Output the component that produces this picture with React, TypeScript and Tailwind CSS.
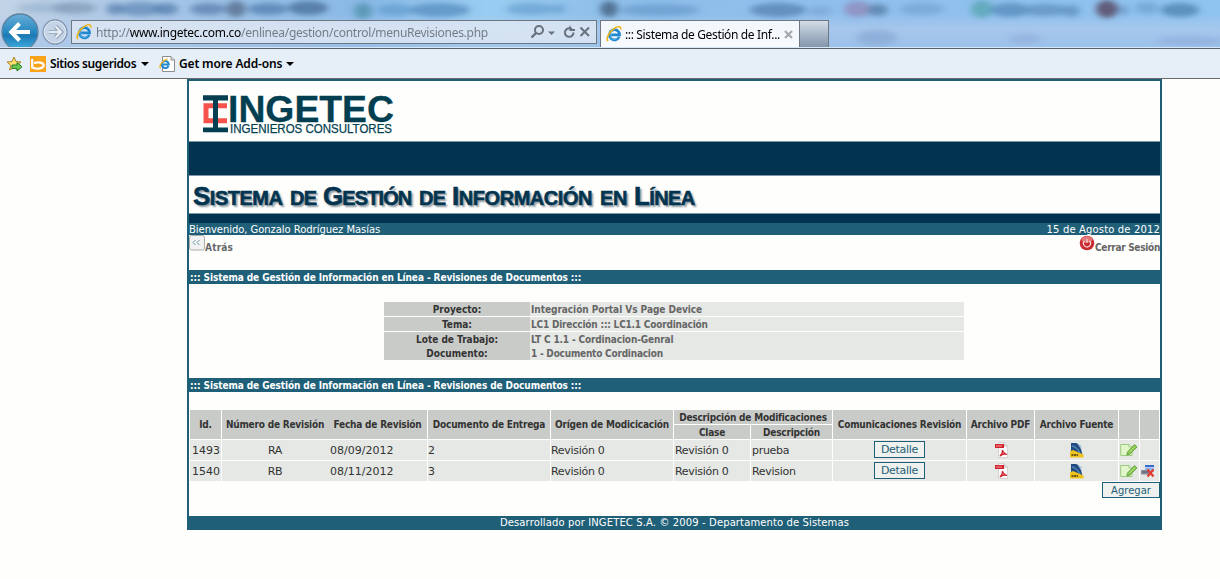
import type { ReactNode } from "react";

const sans = "font-['DejaVu_Sans',sans-serif]";
const cond = "font-['DejaVu_Sans_Condensed','DejaVu_Sans',sans-serif] [font-stretch:condensed] font-bold";

function IeLogo({ size = 16 }: { size?: number }) {
  return (
    <svg width={size} height={size} viewBox="0 0 16 16" fill="none" className="shrink-0">
      <path d="M13.2 10.8A5.1 5.1 0 1 1 13.6 8.9H5.2" stroke="#2188cf" strokeWidth="2.7" />
      <path d="M12.3 10.8A4.5 4.5 0 0 1 4 10.5" stroke="#64bdec" strokeWidth="0.9" />
      <path d="M2.2 15C-.9 13.6 3 5.700 8.600 2.300C12 .2 15.300 0 14.800 3.700" stroke="#efb51c" strokeWidth="1.6" />
    </svg>
  );
}

function Glass() {
  const blobs: [number, number, number, number, string, number][] = [
    [45, 8, 28, 5, "#8ba8c6", 0.5],
    [75, 8, 22, 6, "#7f97b4", 0.7],
    [115, 9, 9, 6, "#5e82b0", 0.75],
    [140, 9, 22, 7, "#5c86b5", 0.7],
    [166, 9, 12, 6, "#4f79aa", 0.7],
    [208, 9, 18, 6, "#5c7fae", 0.75],
    [236, 9, 10, 8, "#5c7393", 0.85],
    [268, 9, 20, 6, "#527eae", 0.75],
    [308, 8, 20, 7, "#4b7198", 0.8],
    [363, 11, 9, 8, "#4d8fa8", 0.75],
    [395, 10, 18, 6, "#5a96c8", 0.6],
    [440, 10, 30, 7, "#5a91c2", 0.8],
    [530, 9, 24, 6, "#6ba1d2", 0.75],
    [558, 9, 8, 5, "#6ba1d2", 0.7],
    [609, 9, 9, 8, "#4c6b8c", 0.9],
    [660, 10, 40, 6, "#6b9cce", 0.75],
    [778, 10, 28, 7, "#5885b5", 0.8],
    [820, 11, 12, 5, "#7aa7d4", 0.7],
    [858, 9, 14, 8, "#9085b5", 0.7],
    [878, 10, 10, 6, "#567fa8", 0.8],
    [922, 9, 22, 6, "#78a6d5", 0.8],
    [982, 9, 11, 9, "#5fa9b8", 0.9],
    [1010, 10, 20, 7, "#5d90c0", 0.85],
    [1045, 10, 24, 6, "#6595c2", 0.85],
    [1071, 11, 9, 6, "#6595c2", 0.85],
    [1107, 9, 11, 9, "#5f5673", 0.95],
    [1123, 10, 6, 5, "#6f9cc8", 0.8],
    [1147, 8, 12, 6, "#76a7d4", 0.85],
    [1180, 10, 19, 7, "#5588b5", 0.85],
    [877, 38, 20, 8, "#88a8d4", 0.7],
    [1025, 39, 16, 5, "#91aedb", 0.7],
    [1190, 41, 34, 5, "#92aedb", 0.7],
  ];
  return (
    <svg width="1220" height="48" className="absolute inset-0">
      <defs>
        <linearGradient id="sky" x1="0" x2="1" y1="0" y2="0">
          <stop offset="0" stopColor="#c2d3e6" />
          <stop offset=".1" stopColor="#adc9e6" />
          <stop offset=".2" stopColor="#97bfe6" />
          <stop offset=".3" stopColor="#88b9e7" />
          <stop offset=".4" stopColor="#9acdf1" />
          <stop offset=".5" stopColor="#8dbee9" />
          <stop offset=".7" stopColor="#90bfed" />
          <stop offset="1" stopColor="#8fc3f0" />
        </linearGradient>
        <linearGradient id="haze" x1="0" x2="0" y1="0" y2="1">
          <stop offset=".3" stopColor="#b3caeb" stopOpacity="0" />
          <stop offset=".6" stopColor="#b3caeb" stopOpacity=".65" />
          <stop offset="1" stopColor="#a3c3e9" stopOpacity=".6" />
        </linearGradient>
        <filter id="soft" filterUnits="userSpaceOnUse" x="0" y="-20" width="1220" height="90" colorInterpolationFilters="sRGB">
          <feGaussianBlur stdDeviation="3.5 2.5" />
        </filter>
      </defs>
      <rect width="1220" height="48" fill="url(#sky)" />
      <rect width="1220" height="48" fill="url(#haze)" />
      <g filter="url(#soft)">
        {blobs.map(([x, y, rx, ry, c, o]) => (
          <ellipse key={x} cx={x} cy={y} rx={rx} ry={ry} fill={c} opacity={o} />
        ))}
      </g>
      <rect y="47" width="1220" height="1" fill="#d6e8f8" />
    </svg>
  );
}

function NavButtons() {
  return (
    <svg width="71" height="47" className="shrink-0">
      <defs>
        <linearGradient id="back" x1="0" x2="0" y1="0" y2="1">
          <stop offset="0" stopColor="#69aed7" />
          <stop offset=".45" stopColor="#2d8cc4" />
          <stop offset=".6" stopColor="#1c7ab5" />
          <stop offset="1" stopColor="#42b1e2" />
        </linearGradient>
      </defs>
      <circle cx="20" cy="32" r="18" fill="url(#back)" stroke="#60829f" strokeWidth="1.3" />
      <path d="M30 32H12M19.500 23.500L11.300 32L19.500 40.500" stroke="#fff" strokeWidth="4" fill="none" />
      <circle cx="55" cy="32" r="12" fill="#c4d3e6" stroke="#8496af" strokeWidth="1.3" />
      <circle cx="55" cy="32" r="10.800" fill="none" stroke="#dce7f3" />
      <path d="M49 32H60M55.500 26.500L61 32L55.500 37.500" stroke="#8799b1" strokeWidth="4.200" fill="none" />
      <path d="M49 32H60M55.500 26.500L61 32L55.500 37.500" stroke="#e3ebf5" strokeWidth="2.400" fill="none" />
    </svg>
  );
}

function Browser() {
  return (
    <header className="h-[79px] font-['Noto_Sans',sans-serif]">
      <div className="relative h-12 overflow-hidden">
        <Glass />
        <div className="relative flex h-12 items-start">
          <NavButtons />
          <div className="mt-5 flex h-6 w-[526px] items-center border border-[#6d7883] bg-[#e0e9f4]/80 pl-1 text-[12px] text-[#737d87]">
            <IeLogo />
            <span className="ml-[4px] whitespace-nowrap pt-px tracking-[-0.27px]">
              http://<span className="text-black">www.ingetec.com.co</span>/enlinea/gestion/control/menuRevisiones.php
            </span>
            <svg width="66" height="20" className="ml-auto mr-[2px] shrink-0" fill="none" stroke="#67717c" strokeWidth="2">
              <circle cx="11" cy="8" r="4" />
              <path d="M8 11L3.500 15.500" strokeWidth="2.400" />
              <path d="M20 9.500H27L23.500 13Z" fill="#67717c" stroke="none" />
              <path d="M45.500 10.500A4.300 4.300 0 1 1 42.500 6.400" />
              <path d="M41.500 3V9H47V7H44.500Z" fill="#67717c" stroke="none" />
              <path d="M52.500 5.500L61 14M61 5.500L52.500 14" />
            </svg>
          </div>
          <div className="ml-[3px] mt-5 flex h-[27px] w-[200px] items-center border-x border-t border-[#6d7883] bg-gradient-to-b from-[#f2f7fc] to-[#f7faff] pl-[5px] text-[12px] text-black">
            <IeLogo />
            <span className="ml-[3px] w-[155px] whitespace-nowrap pt-px tracking-[-0.36px]">::: Sistema de Gestión de Inf...</span>
            <svg width="9" height="9" className="ml-[4px] shrink-0" stroke="#a5a9ad" strokeWidth="2.200">
              <path d="M1 1L8 8M8 1L1 8" />
            </svg>
          </div>
          <div className="mt-5 h-[27px] w-[29px] border-r border-t border-[#6d7883] bg-gradient-to-b from-[#d4dde7] via-[#aab8c8] to-[#8496ab]" />
        </div>
      </div>
      <div className="flex h-[31px] items-center border-b border-t border-b-[#6b6b6b] border-t-[#56616e] bg-[#e6eef8] pl-[6px] text-[12px] font-semibold text-black">
        <svg width="17" height="16" className="shrink-0">
          <path d="M8 1L10 5.500L15 6L11.300 9.300L12.500 14L8 11.600L3.500 14L4.700 9.300L1 6L6 5.500Z" fill="#fcdc72" stroke="#aa8427" />
          <path d="M6 9H11V6.500L16 10.800L11 15V12.500H6Z" fill="#6bc653" stroke="#278126" />
        </svg>
        <svg width="16" height="16" className="ml-[7px] shrink-0">
          <rect width="16" height="16" fill="#f9a31b" />
          <path d="M2.200 3V11.500Q8 14 12.500 11.500Q15 9.500 12.300 7.200Q9 5.500 4 7" fill="none" stroke="#fff" strokeWidth="2.200" />
        </svg>
        <span className="ml-[4px] w-[87px] whitespace-nowrap tracking-[-0.38px]">Sitios sugeridos</span>
        <svg width="8" height="4" className="ml-[4px]"><path d="M0 0H8L4 4Z" /></svg>
        <svg width="16" height="16" viewBox="0 0 16 16" className="ml-[10px] shrink-0">
          <path d="M3.500 .5H12L15.500 4V15.500H3.500Z" fill="#fff" stroke="#8d8d8d" />
          <path d="M12 .5V4H15.500" fill="#ddd" stroke="#8d8d8d" />
          <path d="M9.500 10A3.500 3.500 0 1 1 9.800 8.500H3" fill="none" stroke="#2188cf" strokeWidth="2" />
          <path d="M1.500 12C-.5 10 4 4 8.500 3.200" fill="none" stroke="#efb51c" strokeWidth="1.300" />
        </svg>
        <span className="ml-[4px] w-[104px] whitespace-nowrap tracking-[-0.15px]">Get more Add-ons</span>
        <svg width="8" height="4" className="ml-[3px]"><path d="M0 0H8L4 4Z" /></svg>
      </div>
    </header>
  );
}

function Logo() {
  return (
    <svg width="220" height="60" fontFamily="Liberation Sans, sans-serif" fill="#033f50">
      <path d="M14.500 22.300H38V27.200H19.500V37.300H38V42.300H14.500Z" fill="#f4524a" />
      <path d="M14 14.300H39V19.500H29V46.500H39V51.200H14V46.500H24V19.500H14Z" />
      <text x="39" y="40.500" fontSize="36" fontWeight="700" stroke="#033f50" strokeWidth=".3" textLength="166" lengthAdjust="spacingAndGlyphs">INGETEC</text>
      <text x="41" y="51.500" fontSize="12.500" stroke="#033f50" strokeWidth=".25" textLength="162" lengthAdjust="spacingAndGlyphs">INGENIEROS CONSULTORES</text>
    </svg>
  );
}

function Title() {
  return (
    <div className="flex h-[37px] items-baseline gap-[7px] pt-[4px] pl-[4px] font-['Liberation_Sans',sans-serif] text-[20px] leading-[33px] font-bold whitespace-nowrap text-[#03344f] [-webkit-text-stroke:0.6px_#03344f] [text-shadow:2px_2px_2px_#8b979f]">
      <span className="w-[90px] tracking-[-0.5px]"><span className="text-[26px]">S</span>ISTEMA</span>
      <span className="w-[26px] tracking-[-0.7px]">DE</span>
      <span className="w-[89px] tracking-[-0.9px]"><span className="text-[26px]">G</span>ESTIÓN</span>
      <span className="w-[26px] tracking-[-0.7px]">DE</span>
      <span className="w-[141px] tracking-[-0.45px]"><span className="text-[26px]">I</span>NFORMACIÓN</span>
      <span className="w-[27px] tracking-[-0.3px]">EN</span>
      <span className="w-[61px] tracking-[-0.6px]"><span className="text-[26px]">L</span>ÍNEA</span>
    </div>
  );
}

function SectionBar() {
  return (
    <div className={`${cond} flex h-[14px] items-center bg-[#1f6078] pl-px text-[10px] tracking-[-0.09px] whitespace-pre text-white`}>
      <span>::: Sistema de Gestión de Información en Línea - Revisiones de Documentos :::</span>
    </div>
  );
}

function PdfIcon() {
  return (
    <svg width="16" height="16">
      <path d="M4.500 .5H10L13.500 4V15.500H4.500Z" fill="#fafafa" stroke="#d4d4d4" />
      <path d="M10 .5V4H13.500" fill="#ddd" stroke="#c4c4c4" />
      <rect x="1" y="2" width="9" height="4" fill="#d3232d" />
      <path d="M2 4H8" stroke="#f0a0a0" />
      <path d="M6 14Q9 11 8.500 8Q9 11 13 12.500Q9 11 6 14Z" fill="none" stroke="#d3232d" strokeWidth="1.300" />
    </svg>
  );
}

function FileIcon() {
  return (
    <svg width="16" height="16">
      <path d="M2 1H7Q11 2 12 7L14 15H2Z" fill="#234a80" />
      <path d="M8 1L12.500 4V8Z" fill="#a8c3df" />
      <path d="M3 4Q8 5 11 11" stroke="#4e83b5" strokeWidth="1.500" fill="none" />
      <path d="M1 9.500L4 8L14.500 12.500V15.500H1Z" fill="#eec31b" />
      <path d="M2.500 13H9" stroke="#705c12" strokeWidth="1.800" strokeDasharray="2 .5" />
    </svg>
  );
}

function EditIcon() {
  return (
    <svg width="18" height="16">
      <path d="M.7 2.500H9L12 5V13.500H.7Z" fill="#e2f6cc" stroke="#9dca7f" />
      <path d="M9 2.500V5H12" fill="#fff" stroke="#9dca7f" />
      <path d="M7.500 10L14.500 2.500L17 5L10 12L6.800 13Z" fill="#80c245" stroke="#6ba344" strokeWidth=".9" />
      <path d="M9 10.500L15 4.500" stroke="#c8eba0" />
    </svg>
  );
}

function DeleteIcon() {
  return (
    <svg width="14" height="14">
      <rect x="4" y="1" width="9" height="7" fill="#b7cdf4" />
      <rect x="4" y="1" width="9" height="2" fill="#3c6bd0" />
      <path d="M4 5H13" stroke="#7199df" />
      <rect x="0" y="6" width="8" height="4.500" rx="1" fill="#858c9b" />
      <path d="M1 8H7" stroke="#555c6d" />
      <path d="M6.500 5.500L12.500 12.500M12.500 5.500L6.500 12.500" stroke="#e03a2e" strokeWidth="2.200" />
    </svg>
  );
}

function Head({ children, className = "" }: { children?: ReactNode; className?: string }) {
  return (
    <div className={`${cond} flex items-center justify-center bg-[#c9cbc8] pt-px text-[10px] leading-none tracking-[-0.2px] whitespace-nowrap text-[#333] ${className}`}>
      {children}
    </div>
  );
}

function Cell({ children, className = "" }: { children?: ReactNode; className?: string }) {
  return <div className={`flex items-center bg-[#e5e8e5] pt-px leading-none whitespace-nowrap ${className}`}>{children}</div>;
}

function Row({ id, rev, date, doc, desc, removable }: { id: string; rev: string; date: string; doc: string; desc: string; removable?: boolean }) {
  return (
    <>
      <Cell className="pl-[2px]">{id}</Cell>
      <Cell>
        <span className="w-[106px] text-center tracking-[-0.3px]">{rev}</span>
        <span className="pl-[2px]">{date}</span>
      </Cell>
      <Cell>{doc}</Cell>
      <Cell className="tracking-[-0.3px]">Revisión 0</Cell>
      <Cell className="pl-px tracking-[-0.3px]">Revisión 0</Cell>
      <Cell className="pl-px tracking-[-0.3px]">{desc}</Cell>
      <div className="flex items-center justify-center bg-[#e5e8e5] pb-px">
        <button className="flex h-[17px] w-[51px] items-center justify-center border border-[#1f6078] bg-[#eef1ee] leading-none tracking-[-0.3px] text-[#1f6078]">Detalle</button>
      </div>
      <div className="flex items-center justify-center bg-[#e5e8e5] pb-px pl-[3px]"><PdfIcon /></div>
      <div className="flex items-center justify-center bg-[#e5e8e5] pb-px pl-px"><FileIcon /></div>
      <div className="flex items-center bg-[#e5e8e5] pb-px pl-[1px]"><EditIcon /></div>
      <div className="flex items-center bg-[#e5e8e5] pb-px pl-[1px]">{removable && <DeleteIcon />}</div>
    </>
  );
}

function InfoRow({ label, children, first, className = "" }: { label: string; children: ReactNode; first?: boolean; className?: string }) {
  return (
    <div className={`${cond} flex h-[14px] items-center text-[10px] leading-[14px] ${first ? "mb-px" : ""}`}>
      <div className="h-[14px] w-[146px] bg-[#c9cbc8] pt-px text-center leading-[13px] text-[#333]">{label}</div>
      <div className={`h-[14px] flex-1 bg-[#e5e8e5] pt-px pl-[1px] leading-[13px] text-[#666] ${className}`}>{children}</div>
    </div>
  );
}

export default function App() {
  return (
    <div className="h-[579px] w-[1220px] overflow-hidden bg-[#fefefd]">
      <Browser />
      <main className={`${sans} ml-[187px] flex h-[451px] w-[975px] flex-col border-2 border-[#1f6078] text-[10px] text-[#333]`}>
        <div className="h-[60px]"><Logo /></div>
        <div className="h-[35px] border-y border-[#8095a5] bg-[#03344f]" />
        <Title />
        <div className="h-[10px] border-t border-[#8095a5] bg-[#03344f]" />
        <div className="flex h-3 items-center justify-between bg-[#1f6078] text-[10px] text-white">
          <span className="tracking-[-0.05px]">Bienvenido, Gonzalo Rodríguez Masías</span>
          <span className="tracking-[0.15px]">15 de Agosto de 2012</span>
        </div>
        <div className={`${cond} flex h-[35px] justify-between text-[#666]`}>
          <div className="flex">
            <svg width="16" height="16">
              <rect x=".5" y=".5" width="15" height="14.500" rx="2" fill="#f1f2f1" stroke="#a9adab" />
              <path d="M6.500 5L4 7.500L6.500 10M10.500 5L8 7.500L10.500 10" fill="none" stroke="#6b9eae" />
            </svg>
            <span className="pt-[5px] tracking-[0.2px]">Atrás</span>
          </div>
          <div className="flex">
            <svg width="16" height="16">
              <circle cx="8" cy="8" r="7.300" fill="#c92c30" />
              <ellipse cx="8" cy="4.500" rx="5.500" ry="3.300" fill="#ee9a98" opacity=".7" />
              <path d="M5.500 6A3.500 3.500 0 1 0 10.500 6M8 4V8" fill="none" stroke="#f7dcdc" strokeWidth="1.200" />
            </svg>
            <span className="pt-[5px] tracking-[-0.3px]">Cerrar Sesión</span>
          </div>
        </div>
        <SectionBar />
        <div className="mt-[18px] ml-[195px] w-[580px]">
          <InfoRow label="Proyecto:" first className="tracking-[-0.04px]">Integración Portal Vs Page Device</InfoRow>
          <InfoRow label="Tema:" first className="tracking-[-0.2px]">LC1 Dirección ::: LC1.1 Coordinación</InfoRow>
          <InfoRow label="Lote de Trabajo:" className="tracking-[-0.14px]">LT C 1.1 - Cordinacion-Genral</InfoRow>
          <InfoRow label="Documento:" className="tracking-[-0.22px]">1 - Documento Cordinacion</InfoRow>
        </div>
        <div className="mt-[18px]"><SectionBar /></div>
        <div className="mt-[18px] ml-px grid grid-cols-[31px_205px_122px_122px_76px_81px_133px_67px_83px_20px_19px] grid-rows-[14px_14px_20px_20px] gap-px text-[11px]">
          <Head className="row-span-2">Id.</Head>
          <Head className="row-span-2">
            <span className="w-[106px] text-center">Número de Revisión</span>
            <span className="w-[99px] text-center">Fecha de Revisión</span>
          </Head>
          <Head className="row-span-2">Documento de Entrega</Head>
          <Head className="row-span-2">Orígen de Modicicación</Head>
          <Head className="col-span-2">Descripción de Modificaciones</Head>
          <Head className="row-span-2">Comunicaciones Revisión</Head>
          <Head className="row-span-2">Archivo PDF</Head>
          <Head className="row-span-2">Archivo Fuente</Head>
          <Head className="row-span-2" />
          <Head className="row-span-2" />
          <Head>Clase</Head>
          <Head>Descripción</Head>
          <Row id="1493" rev="RA" date="08/09/2012" doc="2" desc="prueba" />
          <Row id="1540" rev="RB" date="08/11/2012" doc="3" desc="Revision" removable />
        </div>
        <div className="mt-px flex h-[34px] justify-end">
          <button className="flex h-4 w-[58px] items-center justify-center border border-[#1f6078] bg-[#eef1ee] text-[#1f6078]">Agregar</button>
        </div>
        <footer className="flex h-3 items-center justify-center bg-[#1f6078] text-white">
          <span className="tracking-[0.12px]">Desarrollado por INGETEC S.A. © 2009 - Departamento de Sistemas</span>
        </footer>
      </main>
    </div>
  );
}
